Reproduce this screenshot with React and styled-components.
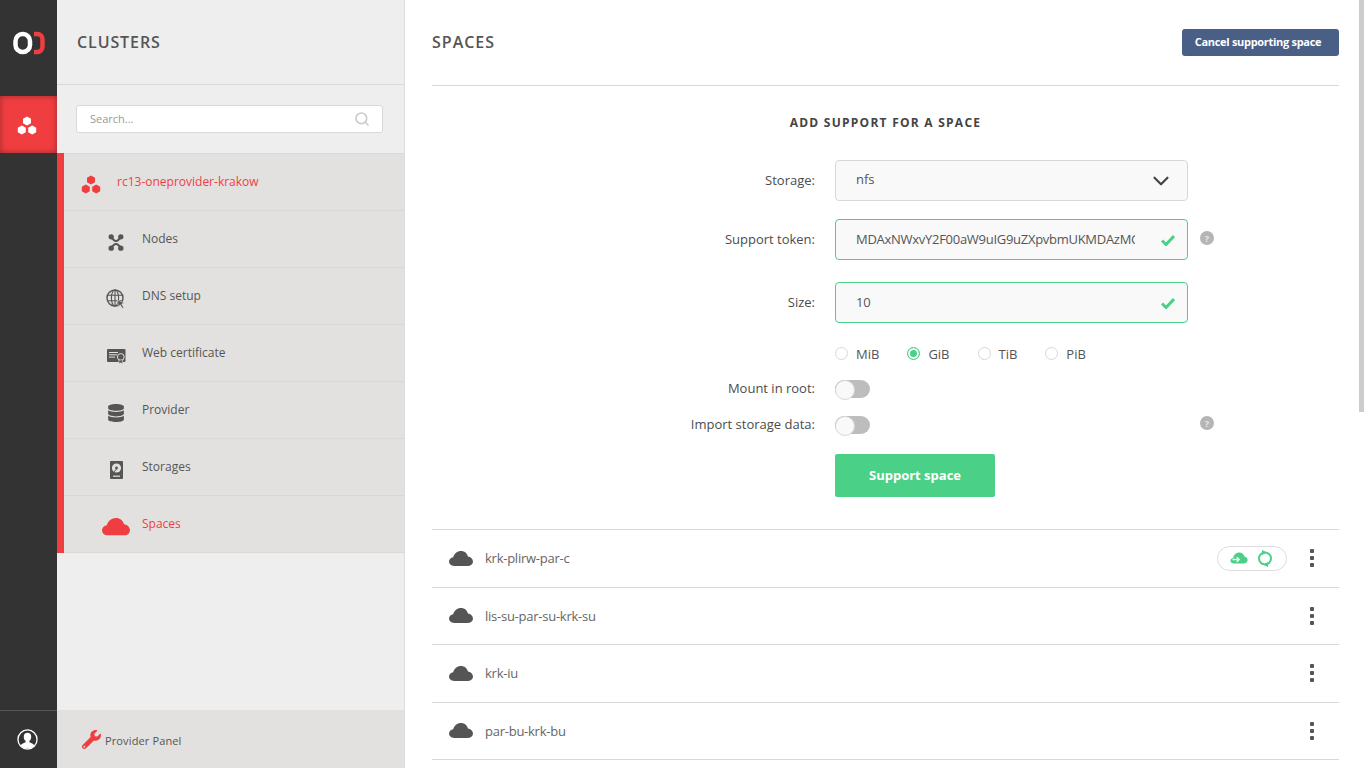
import styled, { createGlobalStyle } from "styled-components"
import { FaDatabase, FaWrench } from "react-icons/fa"
import { LuChevronDown, LuSearch } from "react-icons/lu"

const RED = "#f03e40"
const GREEN = "#4bd187"
const TEXT = "#555"

const GlobalStyle = createGlobalStyle`
    html, body {
        margin: 0;
        height: 100%;
        overflow: hidden;
    }
    body {
        font-family: "Open Sans", "Liberation Sans", sans-serif;
        color: ${TEXT};
    }
    * {
        box-sizing: border-box;
    }
`

function Hexes() {
    return (
        <svg width="20" height="19" viewBox="0 0 20 19" fill="currentColor">
            <path d="M10 .4l4 2.300v4.500l-4 2.300-4-2.300V2.700z" />
            <path d="M4.800 9.400l4 2.300v4.500l-4 2.300-4-2.300v-4.500z" />
            <path d="M15.200 9.400l4 2.300v4.500l-4 2.300-4-2.300v-4.500z" />
        </svg>
    )
}

function Logo() {
    return (
        <svg width="34" height="24" viewBox="0 0 34 24" fill="none" strokeWidth="4.500">
            <rect x="2.500" y="3" width="14.500" height="18" rx="7" stroke="#fff" />
            <path d="M21 3h3c3.500 0 5.500 2.500 5.500 5.500v7c0 3-2 5.500-5.500 5.500h-3" stroke={RED} />
        </svg>
    )
}

function Cloud({ width, color }) {
    return (
        <svg width={width} height={width * 0.62} viewBox="0 0 28 17.400" fill={color}>
            <path d="M6 17.400C2.500 17.400 0 15.200 0 12.300c0-2.600 2-4.700 4.800-5C6 3 9.500 0 14 0c4 0 7.100 2.500 8.100 6.300 3.400.5 5.900 3 5.900 6 0 2.900-2.500 5.100-5.500 5.100z" />
        </svg>
    )
}

function Tick() {
    return (
        <svg width="14" height="12" viewBox="0 0 14 12" fill="none" stroke={GREEN} strokeWidth="3">
            <path d="M1 6.500l4 4L13 2" />
        </svg>
    )
}

function NodesIcon() {
    return (
        <svg width="16" height="19" viewBox="0 0 18 20" fill="#555">
            <path d="M3.600 3.600Q9 13 14.400 3.600M3.600 16.400Q9 7 14.400 16.400" stroke="#555" strokeWidth="2.400" fill="none" />
            <circle cx="3.600" cy="3.600" r="3" />
            <circle cx="14.400" cy="3.600" r="3" />
            <circle cx="3.600" cy="16.400" r="3" />
            <circle cx="14.400" cy="16.400" r="3" />
        </svg>
    )
}

function GlobeIcon() {
    return (
        <svg width="20" height="20" viewBox="0 0 20 20" fill="none" stroke="#555" strokeWidth="1.100">
            <circle cx="9" cy="9" r="8" strokeWidth="1.400" />
            <ellipse cx="9" cy="9" rx="3.600" ry="8" />
            <path d="M9 1v16M1.400 6.200h15.200M1.400 11.800h15.200" />
            <path d="M11.500 11l6.800 3-2.600 1 2 3.400-1.500.8-2-3.400-1.900 2z" fill="#555" stroke="#e2e1df" strokeWidth=".6" />
        </svg>
    )
}

function CertificateIcon() {
    return (
        <svg width="19" height="16" viewBox="0 0 19 16">
            <rect y="1" width="18.500" height="13" rx="1" fill="#555" />
            <path d="M2 4.500h9M2 6.800h8M2 9.100h6" stroke="#e2e1df" strokeWidth="1" />
            <circle cx="13.800" cy="9" r="3.400" fill="#555" stroke="#e2e1df" strokeWidth="1" />
            <path d="M12 12h3.600v3.800l-1.800-1-1.800 1z" fill="#555" stroke="#e2e1df" strokeWidth=".6" />
        </svg>
    )
}

function DriveIcon() {
    return (
        <svg width="13" height="19" viewBox="0 0 13 19">
            <rect width="13" height="18" rx="1" fill="#555" />
            <circle cx="6.500" cy="7" r="4.600" fill="#e2e1df" />
            <circle cx="6.500" cy="7" r="1.400" fill="#555" />
            <path d="M6.500 8l-2.600 3" stroke="#555" strokeWidth="1" />
            <rect x="3" y="14.600" width="7" height="1.200" fill="#e2e1df" />
        </svg>
    )
}

function UserIcon() {
    return (
        <svg width="21" height="21" viewBox="0 0 22 22">
            <circle cx="11" cy="11" r="10" fill="#333" stroke="#fff" strokeWidth="1.400" />
            <path d="M3.800 17.600c1-2.400 3.600-2.800 5.200-3.600v-1.600c-1.300-1-1.900-2.600-1.900-4.400 0-2.600 1.400-4.200 3.900-4.200s3.900 1.600 3.900 4.200c0 1.800-.6 3.400-1.900 4.400V14c1.600.8 4.200 1.200 5.200 3.600A9.400 9.400 0 0 1 11 20.400a9.400 9.400 0 0 1-7.200-2.800z" fill="#fff" />
        </svg>
    )
}

function CloudArrowIcon() {
    return (
        <svg width="18" height="12" viewBox="0 0 18 12">
            <path d="M4 11.600c-2 0-3.600-1.200-3.600-2.800 0-1.500 1.200-2.600 2.800-2.800C3.600 2.800 6.200.4 9.200.4c2.700 0 4.800 1.800 5.300 4.200 1.800.3 3.100 1.700 3.100 3.400 0 2-1.700 3.600-3.900 3.600z" fill={GREEN} />
            <path d="M2.500 7.500h6.500M6.800 5.200l2.500 2.300-2.500 2.300" stroke="#fff" strokeWidth="1.300" fill="none" />
        </svg>
    )
}

function SyncIcon() {
    return (
        <svg width="16" height="17" viewBox="0 0 16 17" fill="none">
            <circle cx="8" cy="8.500" r="6" stroke={GREEN} strokeWidth="2" />
            <path d="M5 0l5 2.500-5 2.500zM11 12l-5 2.500 5 2.500z" fill={GREEN} />
        </svg>
    )
}

function HelpIcon() {
    return <Help>?</Help>
}

function Kebab() {
    return (
        <KebabBox>
            <i />
            <i />
            <i />
        </KebabBox>
    )
}

const menuItems = [
    { name: "Nodes", icon: <NodesIcon /> },
    { name: "DNS setup", icon: <GlobeIcon /> },
    { name: "Web certificate", icon: <CertificateIcon /> },
    { name: "Provider", icon: <FaDatabase size={18} color="#555" /> },
    { name: "Storages", icon: <DriveIcon /> },
    { name: "Spaces", icon: <Cloud width={28} color={RED} />, active: true },
]

const spaces = [
    { name: "krk-plirw-par-c", status: true },
    { name: "lis-su-par-su-krk-su" },
    { name: "krk-iu" },
    { name: "par-bu-krk-bu" },
]

export default function App() {
    return (
        <>
            <GlobalStyle />
            <Page>
                <Rail>
                    <LogoBox><Logo /></LogoBox>
                    <RailItem><Hexes /></RailItem>
                    <RailUser><UserIcon /></RailUser>
                </Rail>

                <Sidebar>
                    <SideHead>CLUSTERS</SideHead>
                    <SearchArea>
                        <SearchBox>
                            <SearchInput placeholder="Search..." />
                            <LuSearch size={16} color="#ccc" strokeWidth={2.5} />
                        </SearchBox>
                    </SearchArea>
                    <Menu>
                        <ClusterRow>
                            <ClusterIcon><Hexes /></ClusterIcon>
                            rc13-oneprovider-krakow
                        </ClusterRow>
                        {menuItems.map((item) => (
                            <MenuRow key={item.name} $active={item.active}>
                                <MenuIcon>{item.icon}</MenuIcon>
                                {item.name}
                            </MenuRow>
                        ))}
                    </Menu>
                    <SideFoot>
                        <FaWrench size={19} color={RED} />
                        Provider Panel
                    </SideFoot>
                </Sidebar>

                <Main>
                    <MainHead>
                        <h1>SPACES</h1>
                        <CancelButton>Cancel supporting space</CancelButton>
                    </MainHead>

                    <FormTitle>ADD SUPPORT FOR A SPACE</FormTitle>

                    <FormRow $top={0}>
                        <Label>Storage:</Label>
                        <Select>
                            nfs
                            <LuChevronDown size={26} color="#444" />
                        </Select>
                    </FormRow>
                    <FormRow $top={18}>
                        <Label>Support token:</Label>
                        <Field>
                            <Input readOnly value="MDAxNWxvY2F00aW9uIG9uZXpvbmUKMDAzMGlkZW50aWZpZXI" />
                            <CheckMark><Tick /></CheckMark>
                        </Field>
                        <HelpIcon />
                    </FormRow>
                    <FormRow $top={22}>
                        <Label>Size:</Label>
                        <Field>
                            <Input readOnly value="10" />
                            <CheckMark><Tick /></CheckMark>
                        </Field>
                    </FormRow>
                    <FormRow $top={22}>
                        <Label />
                        <Radios>
                            {["MiB", "GiB", "TiB", "PiB"].map((unit) => (
                                <Radio key={unit}>
                                    <RadioDot $on={unit === "GiB"} />
                                    {unit}
                                </Radio>
                            ))}
                        </Radios>
                    </FormRow>
                    <FormRow $top={17}>
                        <Label>Mount in root:</Label>
                        <Toggle />
                    </FormRow>
                    <FormRow $top={18}>
                        <Label>Import storage data:</Label>
                        <Toggle />
                        <ToggleHelp><HelpIcon /></ToggleHelp>
                    </FormRow>
                    <FormRow $top={20}>
                        <Label />
                        <SupportButton>Support space</SupportButton>
                    </FormRow>

                    <SpaceList>
                        {spaces.map((space) => (
                            <SpaceRow key={space.name}>
                                <Cloud width={24} color="#555" />
                                <SpaceName>{space.name}</SpaceName>
                                {space.status && (
                                    <StatusPill>
                                        <CloudArrowIcon />
                                        <SyncIcon />
                                    </StatusPill>
                                )}
                                <Kebab />
                            </SpaceRow>
                        ))}
                    </SpaceList>
                </Main>

                <ScrollThumb />
            </Page>
        </>
    )
}

const Page = styled.div`
    display: flex;
    height: 100vh;
    overflow: hidden;
    position: relative;
    background: #fff;
`

const Rail = styled.div`
    width: 57px;
    flex: none;
    display: flex;
    flex-direction: column;
    background: #333;
`

const LogoBox = styled.div`
    height: 96px;
    display: flex;
    align-items: center;
    justify-content: center;
    padding: 0 0 10px 2px;
`

const RailItem = styled.div`
    height: 57px;
    display: flex;
    align-items: center;
    justify-content: center;
    padding: 2px 4px 0 0;
    color: #fff;
    background: ${RED};
    box-shadow: inset 0 0 6px rgba(0, 0, 0, 0.35);
`

const RailUser = styled.div`
    margin-top: auto;
    height: 58px;
    display: flex;
    align-items: center;
    justify-content: center;
    padding: 0 3px 0 0;
    border-top: 1px solid #555;
`

const Sidebar = styled.div`
    width: 348px;
    flex: none;
    display: flex;
    flex-direction: column;
    background: #eee;
    border-right: 1px solid #ddd;
`

const SideHead = styled.div`
    height: 85px;
    padding: 0 0 1px 20px;
    display: flex;
    align-items: center;
    font-size: 16px;
    font-weight: 600;
    letter-spacing: 0.9px;
    border-bottom: 1px solid #d8d8d8;
`

const SearchArea = styled.div`
    height: 68px;
    padding: 20px 21px 0 19px;
`

const SearchBox = styled.div`
    height: 28px;
    padding: 0 12px 0 13px;
    display: flex;
    align-items: center;
    justify-content: space-between;
    background: #fff;
    border: 1px solid #d8d8d8;
    border-radius: 3px;
`

const SearchInput = styled.input`
    border: none;
    outline: none;
    width: 200px;
    padding: 0 0 2px;
    font: 400 11px "Open Sans", sans-serif;
    &::placeholder {
        color: #999;
        opacity: 1;
    }
`

const Menu = styled.div`
    display: flex;
    flex-direction: column;
    border-left: 7px solid ${RED};
`

const ClusterRow = styled.div`
    height: 58px;
    display: flex;
    align-items: center;
    padding-bottom: 2px;
    font-size: 12px;
    font-weight: 500;
    color: ${RED};
    background: #e2e1df;
    border-top: 1px solid #d8d8d8;
    border-bottom: 1px solid #d8d8d8;
`

const ClusterIcon = styled.span`
    width: 53px;
    padding: 6px 0 0 17px;
    display: flex;
`

const MenuRow = styled.div`
    height: 57px;
    display: flex;
    align-items: center;
    padding-bottom: 2px;
    font-size: 12px;
    font-weight: 500;
    color: ${(p) => (p.$active ? RED : TEXT)};
    background: #e2e1df;
    border-bottom: 1px solid #d8d8d8;
`

const MenuIcon = styled.span`
    width: 78px;
    flex: none;
    padding-left: 26px;
    display: flex;
    justify-content: center;
    transform: translateY(4px);
`

const SideFoot = styled.div`
    margin-top: auto;
    height: 58px;
    padding: 2px 0 0 25px;
    display: flex;
    align-items: center;
    gap: 4px;
    font-size: 11px;
    font-weight: 400;
    letter-spacing: 0.13px;
    background: #e2e1df;

    svg {
        margin-top: -2px;
    }
`

const Main = styled.div`
    flex: 1;
    min-width: 0;
    padding: 0 27px;
    overflow: hidden;
`

const MainHead = styled.div`
    height: 86px;
    display: flex;
    align-items: center;
    justify-content: space-between;
    padding-bottom: 2px;
    border-bottom: 1px solid #d8d8d8;

    h1 {
        margin: 0;
        font-size: 16px;
        font-weight: 600;
        letter-spacing: 1px;
    }
`

const CancelButton = styled.button`
    width: 157px;
    height: 27px;
    margin-top: 2px;
    padding: 0 5px 2px 0;
    border: none;
    border-radius: 3px;
    background: #4a5f86;
    color: #fff;
    font: 700 11px "Open Sans", sans-serif;
    letter-spacing: -0.3px;
`

const FormTitle = styled.h2`
    margin: 0 0 29px;
    padding-top: 28px;
    height: 45px;
    font-size: 12px;
    line-height: 17px;
    font-weight: 700;
    letter-spacing: 1.25px;
    text-align: center;
    color: #444;
`

const FormRow = styled.div`
    display: flex;
    align-items: center;
    margin-top: ${(p) => p.$top}px;
    position: relative;
`

const Label = styled.label`
    width: 383px;
    margin-right: 20px;
    padding-bottom: 2px;
    flex: none;
    text-align: right;
    font-size: 13px;
    line-height: 16px;
    font-weight: 500;
    color: #4c4c4c;
`

const Select = styled.div`
    width: 353px;
    height: 41px;
    padding: 0 13px 3px 20px;
    display: flex;
    align-items: center;
    justify-content: space-between;
    font-size: 13px;
    background: #f9f9f9;
    border: 1px solid #d8d8d8;
    border-radius: 4px;

    svg {
        margin-top: 3px;
    }
`

const Field = styled.div`
    width: 353px;
    position: relative;
`

const Input = styled.input`
    display: block;
    width: 100%;
    height: 41px;
    padding: 0 52px 2px 20px;
    font: 400 13px "Open Sans", sans-serif;
    letter-spacing: -0.28px;
    color: ${TEXT};
    background: #f9f9f9;
    border: 1px solid ${GREEN};
    border-radius: 4px;
    outline: none;
`

const CheckMark = styled.span`
    position: absolute;
    right: 13px;
    top: 15px;
    display: flex;
`

const Help = styled.span`
    width: 14px;
    height: 14px;
    margin-left: 12px;
    display: flex;
    align-items: center;
    justify-content: center;
    align-self: flex-start;
    border-radius: 50%;
    background: #b5b5b5;
    color: #e8e8e8;
    font-size: 9px;
    font-weight: 700;
    transform: translateY(12px);
`

const ToggleHelp = styled.span`
    position: absolute;
    left: 756px;
    top: -12px;
`

const Radios = styled.div`
    display: flex;
    gap: 28px;
    height: 18px;
`

const Radio = styled.div`
    display: flex;
    align-items: center;
    gap: 8px;
    font-size: 13px;
    font-weight: 400;
    padding-bottom: 1px;
`

const RadioDot = styled.span`
    width: 13px;
    height: 13px;
    display: block;
    border-radius: 50%;
    background: ${(p) => (p.$on ? GREEN : "#fff")};
    border: 1px solid ${(p) => (p.$on ? GREEN : "#d8d8d8")};
    box-shadow: ${(p) => (p.$on ? "inset 0 0 0 2px #fff" : "none")};
`

const Toggle = styled.span`
    width: 35px;
    height: 18px;
    display: block;
    position: relative;
    border-radius: 9px;
    background: #bdbdbd;

    &::before {
        content: "";
        position: absolute;
        left: 0;
        top: 0;
        width: 18px;
        height: 18px;
        border-radius: 50%;
        background: #f9f9f9;
        border: 1px solid #d8d8d8;
    }
`

const SupportButton = styled.button`
    width: 160px;
    height: 43px;
    padding: 0 0 2px;
    border: none;
    border-radius: 2px;
    background: ${GREEN};
    color: #fff;
    font: 700 13px "Open Sans", sans-serif;
`

const SpaceList = styled.div`
    margin-top: 32px;
    border-top: 1px solid #d8d8d8;
`

const SpaceRow = styled.div`
    height: 57.5px;
    padding: 0 25px 0 17px;
    display: flex;
    align-items: center;
    border-bottom: 1px solid #d8d8d8;
`

const SpaceName = styled.span`
    margin-left: 12px;
    margin-right: auto;
    font-size: 13px;
    letter-spacing: -0.25px;
    color: #666;
`

const StatusPill = styled.div`
    width: 70px;
    height: 25px;
    margin-right: 23px;
    padding-right: 2px;
    display: flex;
    align-items: center;
    justify-content: center;
    gap: 9px;
    border: 1px solid #ddd;
    border-radius: 13px;
`

const KebabBox = styled.div`
    display: flex;
    flex-direction: column;
    gap: 3px;

    i {
        display: block;
        width: 4px;
        height: 4px;
        border-radius: 1px;
        background: #555;
    }
`

const ScrollThumb = styled.div`
    position: absolute;
    right: 2px;
    top: 0;
    width: 5px;
    height: 412px;
    background: #ccc;
`
